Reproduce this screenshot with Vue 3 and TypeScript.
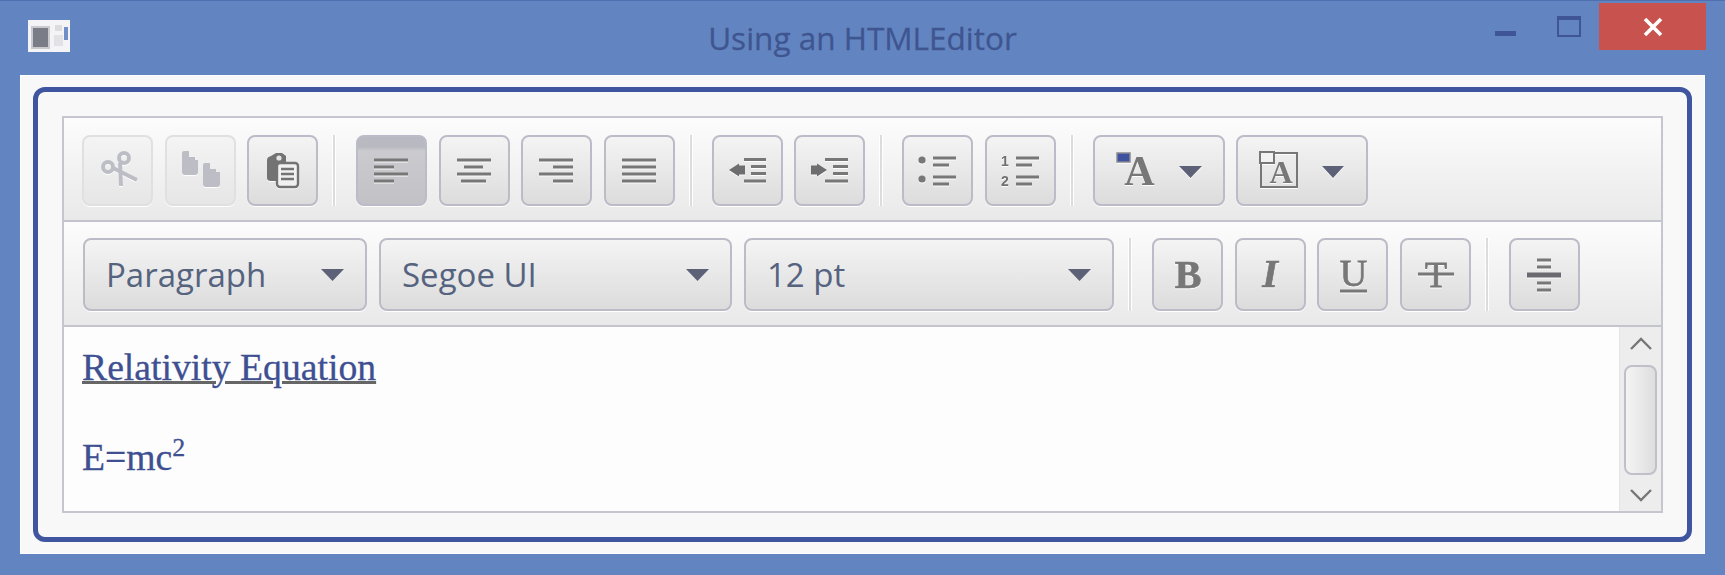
<script setup lang="ts">
type Line = [number, number, number]

interface LineIcon {
  name: string
  lines: Line[]
}

const alignIcons: LineIcon[] = [
  { name: 'left', lines: [[18, 52, 25], [18, 38, 32], [18, 52, 39], [18, 38, 46]] },
  { name: 'center', lines: [[18, 52, 25], [25, 44, 32], [18, 52, 39], [22, 47, 46]] },
  { name: 'right', lines: [[18, 52, 25], [32, 52, 32], [18, 52, 39], [32, 52, 46]] },
  { name: 'justify', lines: [[18, 52, 25], [18, 52, 32], [18, 52, 39], [18, 52, 46]] },
]

const combos = [
  { label: 'Paragraph', width: 284 },
  { label: 'Segoe UI', width: 353 },
  { label: '12 pt', width: 370 },
]

function linePath(lines: Line[]): string {
  return lines.map(([a, b, y]) => `M${a} ${y}H${b}`).join('')
}
</script>

<template>
  <div class="window">
    <header class="titlebar">
      <div class="title-left">
        <svg class="app-icon" viewBox="0 0 42 32">
          <rect width="42" height="32" fill="#f4f4f6" />
          <rect x="3" y="6" width="19" height="23" fill="#c9c9ce" />
          <rect x="5" y="8" width="15" height="19" fill="#7a7d88" />
          <rect x="27" y="5" width="7" height="6" fill="#dcdce0" />
          <rect x="26" y="15" width="9" height="11" fill="#e2e2e6" />
          <rect x="36" y="7" width="4" height="13" fill="#6f8fc8" />
        </svg>
      </div>
      <h1 class="title">Using an HTMLEditor</h1>
      <div class="controls">
        <span class="minimize"></span>
        <span class="maximize"></span>
        <span class="close">
          <svg width="20" height="20" viewBox="0 0 20 20">
            <path d="M2 2L18 18M18 2L2 18" stroke="#fff" stroke-width="3.6" />
          </svg>
        </span>
      </div>
    </header>

    <main class="client">
      <section class="panel">
        <div class="editor">
          <div class="toolbar top">
            <div class="group">
              <button class="tool disabled">
                <svg class="ico" viewBox="0 0 71 71">
                  <g fill="none" stroke="#bdbdc6" stroke-width="4">
                    <circle cx="26" cy="32" r="5" />
                    <circle cx="42" cy="23" r="5" />
                    <path d="M31 33L55 45M38 28L39 51" />
                  </g>
                </svg>
              </button>
              <button class="tool disabled">
                <svg class="ico" viewBox="0 0 71 71">
                  <path fill="#bdbdc6" d="M17 18Q17 16 19 16H24V22H30V25H33V37Q33 40 30 40H20Q17 40 17 37Z" />
                  <path fill="#bdbdc6" d="M38 30Q38 28 40 28H45V34H51V37H55V49Q55 52 52 52H41Q38 52 38 49Z" />
                </svg>
              </button>
              <button class="tool">
                <svg class="ico" viewBox="0 0 71 71">
                  <path fill="#737373" d="M24 21L29 18H35L39 21V46H24Q20 46 20 43V25Q20 22 24 21Z" />
                  <circle cx="32" cy="23" r="2.6" fill="#e4e4e4" />
                  <rect x="30" y="28" width="21" height="24" rx="3" fill="#f1f1f1" stroke="#737373" stroke-width="2.4" />
                  <path d="M34 34H47M34 39H47M34 44H47" stroke="#737373" stroke-width="2.4" />
                </svg>
              </button>
            </div>
            <span class="sep"></span>
            <div class="group">
              <button v-for="icon in alignIcons" :key="icon.name" class="tool" :class="{ active: icon.name === 'left' }">
                <svg class="ico" viewBox="0 0 71 71">
                  <path :d="linePath(icon.lines)" stroke="#777" stroke-width="3" />
                </svg>
              </button>
            </div>
            <span class="sep"></span>
            <div class="group">
              <button class="tool">
                <svg class="ico" viewBox="0 0 71 71">
                  <path d="M32 24.5H54M39 31.5H54M39 38.5H54M32 46H54" stroke="#777" stroke-width="3" />
                  <path fill="#6e6e70" d="M17 35L27 28.5V30.5H33V39.5H27V41.5Z" />
                </svg>
              </button>
              <button class="tool">
                <svg class="ico" viewBox="0 0 71 71">
                  <path d="M31 24.5H54M39 31.5H54M39 38.5H54M31 46H54" stroke="#777" stroke-width="3" />
                  <path fill="#6e6e70" d="M33 35L23 28.5V30.5H17V39.5H23V41.5Z" />
                </svg>
              </button>
            </div>
            <span class="sep"></span>
            <div class="group">
              <button class="tool">
                <svg class="ico" viewBox="0 0 71 71">
                  <circle cx="20" cy="25" r="3.6" fill="#777" />
                  <circle cx="20" cy="44" r="3.6" fill="#777" />
                  <path d="M31 23H54M31 30H47M31 42H54M31 49H47" stroke="#777" stroke-width="3" />
                </svg>
              </button>
              <button class="tool">
                <svg class="ico" viewBox="0 0 71 71">
                  <text class="num" x="20" y="31">1</text>
                  <text class="num" x="20" y="51">2</text>
                  <path d="M31 23H54M31 30H47M31 42H54M31 49H47" stroke="#777" stroke-width="3" />
                </svg>
              </button>
            </div>
            <span class="sep"></span>
            <div class="group">
              <button class="tool wide">
                <svg class="ico ico-wide" viewBox="0 0 132 71">
                  <rect x="24" y="18" width="13" height="9" fill="#3f52a0" stroke="#8a8a90" stroke-width="1.5" />
                  <text class="letter" x="46.5" y="50" font-size="42">A</text>
                  <path class="tri" d="M86 31H109L97.5 43Z" />
                </svg>
              </button>
              <button class="tool wide">
                <svg class="ico ico-wide" viewBox="0 0 132 71">
                  <rect x="25" y="18" width="36" height="34" fill="none" stroke="#777" stroke-width="2" />
                  <rect x="24" y="17" width="14" height="11" fill="#f2f2f2" stroke="#777" stroke-width="2" />
                  <text class="letter" x="45" y="48" font-size="32">A</text>
                  <path class="tri" d="M86 31H108L97 43Z" />
                </svg>
              </button>
            </div>
          </div>

          <div class="toolbar bottom">
            <div class="group combos">
              <button v-for="combo in combos" :key="combo.label" class="combo" :style="{ width: combo.width + 'px' }">
                <span>{{ combo.label }}</span>
                <svg width="23" height="12" viewBox="0 0 23 12"><path class="tri" d="M0 0H23L11.5 12Z" /></svg>
              </button>
            </div>
            <span class="sep"></span>
            <div class="group">
              <button class="tool">
                <svg class="ico" viewBox="0 0 71 73">
                  <text class="letter heavy" x="36" y="50" font-size="40">B</text>
                </svg>
              </button>
              <button class="tool">
                <svg class="ico" viewBox="0 0 71 73">
                  <text class="letter heavy" x="35" y="49" font-size="40" font-style="italic">I</text>
                </svg>
              </button>
              <button class="tool">
                <svg class="ico" viewBox="0 0 71 73">
                  <text class="letter thin" x="36.5" y="48" font-size="38">U</text>
                  <path d="M23 53H50" stroke="#777" stroke-width="3" />
                </svg>
              </button>
              <button class="tool">
                <svg class="ico" viewBox="0 0 71 73">
                  <text class="letter thin" x="36" y="49" font-size="36">T</text>
                  <path d="M18 36H54" stroke="#777" stroke-width="3" />
                </svg>
              </button>
            </div>
            <span class="sep"></span>
            <div class="group">
              <button class="tool">
                <svg class="ico" viewBox="0 0 71 73">
                  <path d="M28 22H42M28 29H42M28 45H42M28 52H42" stroke="#777" stroke-width="3" />
                  <path d="M18 37H52" stroke="#6a6a70" stroke-width="5" />
                </svg>
              </button>
            </div>
          </div>

          <div class="body">
            <div class="content">
              <u>Relativity Equation</u><br /><br />E=mc<sup>2</sup>
            </div>
            <div class="scrollbar">
              <svg width="22" height="13" viewBox="0 0 22 13"><path d="M1 12L11 2L21 12" fill="none" stroke="#777" stroke-width="2.4" /></svg>
              <div class="thumb"></div>
              <svg width="22" height="13" viewBox="0 0 22 13"><path d="M1 1L11 11L21 1" fill="none" stroke="#777" stroke-width="2.4" /></svg>
            </div>
          </div>
        </div>
      </section>
    </main>
  </div>
</template>

<style>
html,
body {
  margin: 0;
  background: #6285c1;
}
</style>

<style scoped>
.window {
  width: 1725px;
  height: 575px;
  box-sizing: border-box;
  padding: 0 20px 21px;
  display: flex;
  flex-direction: column;
  background: #6285c1;
  border-top: 1px solid #4f6fb0;
}

.titlebar {
  height: 74px;
  margin: 0 -20px;
  flex-shrink: 0;
  display: grid;
  grid-template-columns: 1fr auto 1fr;
}

.title-left {
  padding: 19px 0 0 28px;
}

.app-icon {
  display: block;
  width: 42px;
  height: 32px;
}

.title {
  margin: 0;
  padding-top: 17px;
  font: 400 31.5px/40px "Open Sans", sans-serif;
  color: #3f5590;
  -webkit-text-stroke: 0.3px #3f5590;
}

.controls {
  display: flex;
  justify-content: flex-end;
  align-items: flex-start;
  padding-right: 19px;
}

.minimize {
  width: 21px;
  height: 5px;
  margin: 30px 41px 0 0;
  background: #3f5597;
}

.maximize {
  width: 24px;
  height: 21px;
  box-sizing: border-box;
  margin: 15px 18px 0 0;
  border: 2px solid #3f5597;
  border-top-width: 4px;
}

.close {
  width: 107px;
  height: 47px;
  margin-top: 2px;
  display: flex;
  align-items: center;
  justify-content: center;
  background: #c7524e;
}

.client {
  flex: 1;
  min-height: 0;
  padding: 12px 13px;
  background: #f8f8f9;
  box-shadow: inset 0 0 0 1px #fff;
}

.panel {
  height: 100%;
  box-sizing: border-box;
  padding: 24px;
  background: #f8f8f8;
  border: 5px solid #40559f;
  border-radius: 12px;
}

.editor {
  height: 100%;
  box-sizing: border-box;
  display: flex;
  flex-direction: column;
  border: 2px solid #c6c6ce;
}

.toolbar {
  display: flex;
  flex-shrink: 0;
  box-sizing: border-box;
  background: linear-gradient(#fcfcfc, #e9e9e9);
  border-bottom: 2px solid #c4c4cc;
}

.top {
  height: 104px;
  padding: 17px 0 0 18px;
}

.bottom {
  height: 105px;
  padding: 16px 0 0 19px;
}

.group {
  display: flex;
  gap: 11.5px;
}

.combos {
  gap: 12px;
}

.sep {
  width: 2px;
  height: 71px;
  margin: 0 21px 0 15px;
  background: #dcdcdc;
  box-shadow: 1px 0 0 #fff, -1px 0 0 #fff;
}

.top .sep {
  margin-right: 20px;
}

.top .sep:first-of-type {
  margin-right: 21px;
}

.bottom .sep {
  height: 73px;
}

.tool,
.combo {
  box-sizing: border-box;
  height: 71px;
  padding: 0;
  display: flex;
  align-items: center;
  background: linear-gradient(#f4f4f4, #dcdcdc);
  border: 2px solid #bcbcc8;
  border-radius: 8px;
  box-shadow: 0 1px 0 #fff;
}

.tool {
  width: 71px;
  justify-content: center;
}

.wide {
  width: 132px;
}

.bottom .tool,
.combo {
  height: 73px;
}

.disabled {
  background: linear-gradient(#f4f4f4, #e6e6e6);
  border-color: #e0e0e3;
}

.active {
  background: linear-gradient(#b9b9c1 0 10px, #cbcbcf 14px, #c2c2c6);
}

.ico {
  display: block;
  flex-shrink: 0;
  width: 71px;
  height: 71px;
  filter: drop-shadow(0 1px 0 rgba(255, 255, 255, 0.9));
}

.bottom .ico {
  height: 73px;
}

.ico-wide {
  width: 132px;
}

.num {
  font: 700 14px "Liberation Sans", sans-serif;
  fill: #707070;
  text-anchor: middle;
}

.letter {
  font-family: "Liberation Serif", serif;
  font-weight: 700;
  fill: #777;
  text-anchor: middle;
}

.heavy {
  stroke: #777;
  stroke-width: 0.7;
}

.thin {
  font-weight: 400;
  stroke: #777;
  stroke-width: 0.8;
}

.tri {
  fill: #5d6178;
}

.combo {
  justify-content: space-between;
  padding: 0 21px 0 21px;
  font: 400 33px/40px "Open Sans", sans-serif;
  color: #55637f;
}

.body {
  flex: 1;
  min-height: 0;
  display: flex;
  background: #fdfdfd;
}

.content {
  flex: 1;
  padding: 18px 0 0 18px;
  font: 400 37.7px/45px "Liberation Serif", serif;
  color: #3f5092;
  -webkit-text-stroke: 0.3px #3f5092;
}

.content u {
  text-decoration-color: #666;
  text-decoration-thickness: 3px;
  text-underline-offset: 1px;
}

.content sup {
  font-size: 26px;
  line-height: 0;
}

.scrollbar {
  width: 42px;
  box-sizing: border-box;
  padding: 10px 0 9px;
  display: flex;
  flex-direction: column;
  align-items: center;
  justify-content: space-between;
  background: #ededed;
  border-left: 1px solid #e4e4e4;
}

.thumb {
  width: 33px;
  height: 110px;
  box-sizing: border-box;
  background: linear-gradient(90deg, #f4f4f4, #dedede);
  border: 2px solid #c0c0c8;
  border-radius: 8px;
}
</style>
